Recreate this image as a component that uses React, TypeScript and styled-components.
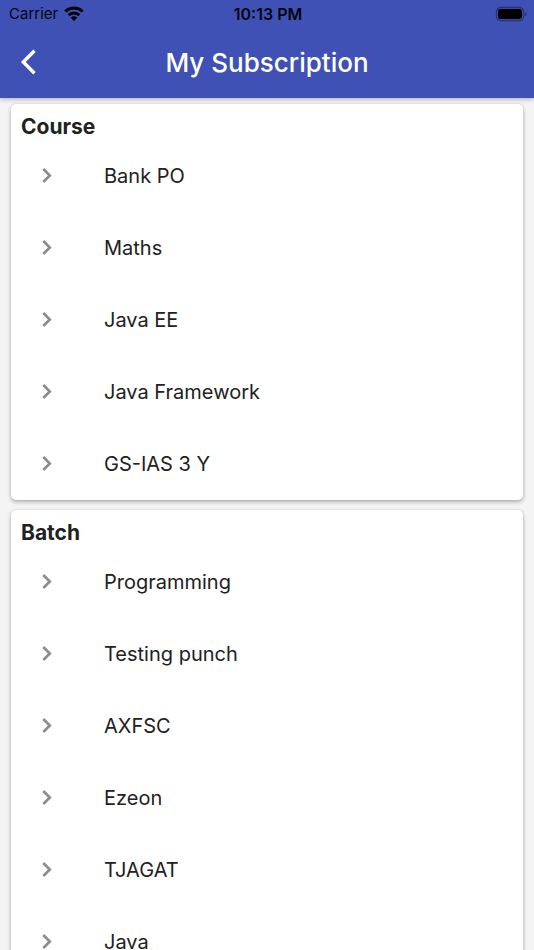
import React from 'react';
import styled, { createGlobalStyle } from 'styled-components';

const GlobalStyle = createGlobalStyle`
  *, *::before, *::after { box-sizing: border-box; }
  body {
    margin: 0;
    background: #f4f4f4;
    color: #212121;
    font-family: Inter, "Liberation Sans", sans-serif;
  }
`;

const Screen = styled.div`
  display: flex;
  flex-direction: column;
  height: 100vh;
`;

const Header = styled.header`
  position: relative;
  z-index: 1;
  flex: none;
  background: #3f51b5;
  box-shadow: 0 1px 5px rgba(0, 0, 0, 0.3);
`;

const StatusBar = styled.div`
  display: grid;
  grid-template-columns: 1fr auto 1fr;
  align-items: center;
  height: 26px;
  padding: 0 7px 0 9px;
  color: #05060c;
  font-size: 15px;
  line-height: 28px;
`;

const Carrier = styled.div`
  display: flex;
  align-items: center;
  gap: 6px;
`;

const Time = styled.time`
  font-size: 16px;
  font-weight: 600;
`;

const Battery = styled.svg`
  justify-self: end;
`;

const AppBar = styled.div`
  display: grid;
  grid-template-columns: 56px 1fr 56px;
  align-items: center;
  height: 72px;
`;

const BackButton = styled.button`
  display: flex;
  align-items: center;
  justify-content: center;
  height: 56px;
  padding: 0;
  border: 0;
  background: none;
  color: #fff;
  cursor: pointer;
`;

const Title = styled.h1`
  margin: 0;
  padding-top: 2px;
  color: #fff;
  font-size: 26px;
  font-weight: 500;
  line-height: 32px;
  text-align: center;
`;

const Content = styled.main`
  flex: 1;
  min-height: 0;
  display: flex;
  flex-direction: column;
  gap: 10px;
  padding: 6px 11px;
  overflow-y: auto;
  scrollbar-width: none;
`;

const Card = styled.section`
  flex: none;
  border-radius: 5px;
  background: #fff;
  box-shadow: 0 2px 4px rgba(0, 0, 0, 0.28), 0 0 2px rgba(0, 0, 0, 0.12);
`;

const CardTitle = styled.h2`
  height: 36px;
  margin: 0;
  padding: 0 10px;
  font-size: 21px;
  font-weight: 700;
  line-height: 45px;
`;

const List = styled.ul`
  margin: 0;
  padding: 0;
  list-style: none;
`;

const RowButton = styled.button`
  display: grid;
  grid-template-columns: 72px 1fr;
  align-items: center;
  width: 100%;
  height: 72px;
  padding: 0 21px;
  border: 0;
  background: none;
  color: inherit;
  font: inherit;
  font-size: 20px;
  line-height: 28px;
  text-align: left;
  cursor: pointer;
`;

const sections = [
  { title: 'Course', items: ['Bank PO', 'Maths', 'Java EE', 'Java Framework', 'GS-IAS 3 Y'] },
  { title: 'Batch', items: ['Programming', 'Testing punch', 'AXFSC', 'Ezeon', 'TJAGAT', 'Java'] },
];

function WifiIcon() {
  return (
    <svg width="20" height="16" viewBox="0 0 20 16" fill="none" stroke="#000" strokeWidth="3" aria-hidden="true">
      <path d="M1.3 5.5a12.6 12.6 0 0 1 17.4 0" />
      <path d="M4.6 9.1a7.9 7.9 0 0 1 10.8 0" />
      <path d="M10 14.9 6.8 11.7a4.5 4.5 0 0 1 6.4 0z" fill="#000" stroke="none" />
    </svg>
  );
}

function BatteryIcon() {
  return (
    <Battery width="32" height="16" viewBox="0 0 32 16" role="img" aria-label="Battery full">
      <rect x="1.5" y="1.5" width="27" height="13" rx="4" fill="none" stroke="#29356f" strokeWidth="1.3" />
      <rect x="3" y="3" width="24" height="10" rx="2.4" fill="#000" />
      <path d="M30 5.7c2 .7 2 3.9 0 4.6z" fill="#29356f" />
    </Battery>
  );
}

function BackIcon() {
  return (
    <svg width="28" height="28" viewBox="0 0 28 28" fill="none" stroke="currentColor" strokeWidth="3.4" aria-hidden="true">
      <path d="M20.5 2.8 9.3 14l11.2 11.2" />
    </svg>
  );
}

function ChevronIcon() {
  return (
    <svg width="30" height="30" viewBox="0 0 30 30" fill="none" stroke="#8b8b8b" strokeWidth="2.6" aria-hidden="true">
      <path d="M11.3 8 17.8 14.5 11.3 21" />
    </svg>
  );
}

export default function App() {
  return (
    <Screen>
      <GlobalStyle />
      <Header>
        <StatusBar>
          <Carrier>
            Carrier
            <WifiIcon />
          </Carrier>
          <Time>10:13 PM</Time>
          <BatteryIcon />
        </StatusBar>
        <AppBar>
          <BackButton type="button" aria-label="Back">
            <BackIcon />
          </BackButton>
          <Title>My Subscription</Title>
        </AppBar>
      </Header>
      <Content>
        {sections.map((section) => (
          <Card key={section.title}>
            <CardTitle>{section.title}</CardTitle>
            <List>
              {section.items.map((item) => (
                <li key={item}>
                  <RowButton type="button">
                    <ChevronIcon />
                    <span>{item}</span>
                  </RowButton>
                </li>
              ))}
            </List>
          </Card>
        ))}
      </Content>
    </Screen>
  );
}
